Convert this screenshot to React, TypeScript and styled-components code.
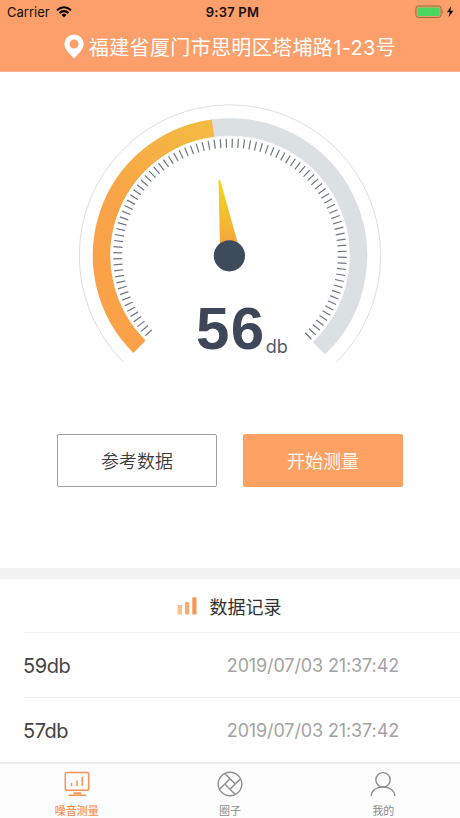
import React from 'react';
import styled, { createGlobalStyle } from 'styled-components';

const GlobalStyle = createGlobalStyle`
  * { box-sizing: border-box; }
  body {
    margin: 0;
    background: #fff;
    font-family: Inter, "Noto Sans CJK SC", sans-serif;
    color: #444;
  }
`;

const Screen = styled.div`
  width: 460px;
  height: 818px;
  display: flex;
  flex-direction: column;
  overflow: hidden;
  background: #fff;
`;

const Header = styled.header`
  height: 72px;
  background: #fc9f6a;
  border-bottom: 1px solid #fcb48c;
`;

const StatusBar = styled.div`
  height: 24px;
  padding: 0 5px 0 7px;
  display: grid;
  grid-template-columns: 1fr auto 1fr;
  align-items: center;
  color: #15100d;
  font-size: 13px;
  line-height: 24px;
`;

const Carrier = styled.div`
  display: flex;
  align-items: center;
  gap: 6px;
`;

const Clock = styled.div`
  font-weight: 600;
  letter-spacing: 0.2px;
  padding-left: 3px;
`;

const Battery = styled.div`
  display: flex;
  justify-content: flex-end;
`;

const Location = styled.h1`
  margin: 0;
  height: 45px;
  display: flex;
  align-items: center;
  justify-content: center;
  gap: 5px;
  color: #fff;
  font-size: 20px;
  font-weight: 400;
  letter-spacing: 0.36px;
  white-space: nowrap;
`;

const Meter = styled.section`
  height: 496px;
  display: flex;
  flex-direction: column;
  align-items: center;
`;

const Gauge = styled.div`
  display: grid;
  width: 310px;
  height: 265px;
  margin-top: 28px;
  & > * { grid-area: 1 / 1; }
`;

const Reading = styled.div`
  align-self: end;
  display: flex;
  align-items: flex-end;
  padding: 0 0 0 121px;
  height: 68px;
  color: #3e4659;
`;

const Value = styled.span`
  font-family: "Liberation Sans", Arial, sans-serif;
  font-size: 60px;
  line-height: 68px;
  margin-bottom: 2px;
  font-weight: 700;
  letter-spacing: 1.5px;
`;

const Unit = styled.span`
  font-size: 18px;
  line-height: 22px;
  margin-bottom: 7px;
  color: #555b66;
`;

const Actions = styled.div`
  display: flex;
  gap: 26px;
  margin-top: 69px;
`;

const Button = styled.button<{ $primary?: boolean }>`
  width: 160px;
  height: 53px;
  padding: 0 0 1px;
  border-radius: 2px;
  border: 1px solid ${(p) => (p.$primary ? '#fda263' : '#a0a0a0')};
  background: ${(p) => (p.$primary ? '#fda263' : '#fff')};
  color: ${(p) => (p.$primary ? '#fff' : '#3c3c3c')};
  font: 350 18px Inter, "Noto Sans CJK SC", sans-serif;
`;

const Records = styled.section`
  flex: 1;
  border-top: 11px solid #f2f2f2;
`;

const RecordsTitle = styled.h2`
  margin: 0;
  height: 53px;
  padding: 0 2px 0 0;
  display: flex;
  align-items: center;
  justify-content: center;
  gap: 13px;
  font-size: 18px;
  font-weight: 400;
  color: #303030;
`;

const Row = styled.div`
  height: 65px;
  margin-left: 23px;
  padding: 1px 61px 0 0;
  display: flex;
  align-items: center;
  justify-content: space-between;
  border-top: 1px solid #f2f2f2;
`;

const Level = styled.span`
  font-size: 20px;
  letter-spacing: -0.45px;
`;

const Stamp = styled.time`
  font-size: 18px;
  letter-spacing: -0.12px;
  color: #a3a3a3;
`;

const TabBar = styled.nav`
  height: 56px;
  display: grid;
  grid-template-columns: repeat(3, 1fr);
  border-top: 2px solid #ececec;
  background: #fdfdfd;
`;

const Tab = styled.a<{ $active?: boolean }>`
  display: flex;
  flex-direction: column;
  align-items: center;
  padding-top: 7px;
  gap: 6px;
  font-size: 11px;
  line-height: 16px;
  font-weight: ${(p) => (p.$active ? 500 : 400)};
  color: ${(p) => (p.$active ? '#f79256' : '#8e8e8e')};
`;

const point = (r: number, deg: number) => {
  const a = (deg * Math.PI) / 180;
  return [155 + r * Math.sin(a), 156 - r * Math.cos(a)];
};

const arc = (r: number, from: number, to: number) => {
  const [x1, y1] = point(r, from);
  const [x2, y2] = point(r, to);
  return `M${x1} ${y1}A${r} ${r} 0 ${to - from > 180 ? 1 : 0} 1 ${x2} ${y2}`;
};

const ticks = Array.from({ length: 91 }, (_, i) => {
  const deg = -133.5 + i * 2.992;
  const [x1, y1] = point(107.8, deg);
  const [x2, y2] = point(116.8, deg);
  return `M${x1} ${y1}L${x2} ${y2}`;
}).join('');

const Dial = () => (
  <svg width="310" height="265" viewBox="0 0 310 265" fill="none">
    <defs>
      <linearGradient id="level" gradientUnits="userSpaceOnUse" x1="40" y1="190" x2="138" y2="20">
        <stop offset="0" stopColor="#fba249" />
        <stop offset="0.4" stopColor="#f9a448" />
        <stop offset="1" stopColor="#f3bc42" />
      </linearGradient>
      <linearGradient id="needle" x1="0" y1="0" x2="0" y2="1">
        <stop offset="0" stopColor="#f2d91f" />
        <stop offset="1" stopColor="#f4a33c" />
      </linearGradient>
    </defs>
    <g transform="translate(0 -0.5)">
      <path d={arc(150.7, -135, 135)} stroke="#dedede" />
      <path d={arc(128.5, -8, 136.2)} stroke="#dbe0e3" strokeWidth="17.5" />
      <path d={arc(128.5, -135.2, -7.6)} stroke="url(#level)" strokeWidth="17.5" />
      <path d={ticks} stroke="#6f7580" strokeWidth="1.2" />
    </g>
    <path d="M143.500 80h1.700l18.400 66-18.600 2z" fill="url(#needle)" />
    <circle cx="154.4" cy="155.8" r="15.6" fill="#3d4c5a" />
  </svg>
);

const WifiIcon = () => (
  <svg width="16" height="12" viewBox="0 0 16 12" fill="none" stroke="#000" strokeWidth="2.1">
    <path d="M1 4.300Q8-1.800 15 4.300M3.600 7Q8 3.100 12.400 7" />
    <path d="M5.500 8.800Q8 6.800 10.500 8.800L8 11.400z" fill="#000" stroke="none" />
  </svg>
);

const BatteryIcon = () => (
  <svg width="40" height="14" viewBox="0 0 40 14">
    <rect x="0.9" y="1" width="25.2" height="11.4" rx="2.6" fill="none" stroke="#8d6a3f" />
    <rect x="2.4" y="2.5" width="22.2" height="8.4" rx="1.2" fill="#4bd660" />
    <path d="M27.4 4.7q1.6 2 0 4z" fill="#8d6a3f" />
    <path d="M36.2 1.2l-4.2 6h2.9l-1.4 5 4.8-6.4h-3z" fill="#000" />
  </svg>
);

const PinIcon = () => (
  <svg width="20" height="25" viewBox="0 0 20 25">
    <path
      fill="#fff"
      fillRule="evenodd"
      d="M10 .4a9.7 9.7 0 0 1 9.7 9.7c0 5-5.4 10-9.7 14.5C5.7 20.1.3 15.1.3 10.1A9.7 9.7 0 0 1 10 .4zm0 5.1a4.5 4.5 0 1 0 0 9 4.5 4.5 0 0 0 0-9z"
    />
  </svg>
);

const BarsIcon = () => (
  <svg width="20" height="18" viewBox="0 0 20 18">
    <path d="M.5 8H5v9.5H.5z" fill="#fdc08a" />
    <path d="M8 5h4.2v12.5H8z" fill="#fbab72" />
    <path d="M15.3.3h4.2v17.2h-4.2z" fill="#f9965c" />
  </svg>
);

const MonitorIcon = () => (
  <svg width="26" height="26" viewBox="0 0 26 26" fill="none" stroke="currentColor" strokeWidth="1.5">
    <rect x="1.3" y="1.5" width="23.4" height="17.8" rx="1.8" />
    <path d="M7.6 12v3M13 9.5V15M18.2 5.8V15" />
    <path d="M9.5 22.3H17" strokeWidth="2" />
    <path d="M4.5 24.3H22" />
  </svg>
);

const CircleIcon = () => (
  <svg width="26" height="26" viewBox="0 0 26 26" fill="none" stroke="currentColor" strokeWidth="1.4">
    <circle cx="13" cy="13" r="11.8" />
    <path d="M18.2 13L8 2.8M13 18.2L23.2 8M7.8 13L18 23.2M13 7.8L2.8 18" />
  </svg>
);

const PersonIcon = () => (
  <svg width="26" height="26" viewBox="0 0 26 26" fill="none" stroke="currentColor" strokeWidth="1.4">
    <circle cx="13" cy="8.8" r="7.2" />
    <path d="M1.2 25c0-5.2 5-9 11.8-9s11.8 3.8 11.8 9" />
  </svg>
);

const records = [
  { level: '59db', time: '2019/07/03 21:37:42' },
  { level: '57db', time: '2019/07/03 21:37:42' },
];

const tabs = [
  { label: '噪音测量', Icon: MonitorIcon },
  { label: '圈子', Icon: CircleIcon },
  { label: '我的', Icon: PersonIcon },
];

export default function App() {
  return (
    <Screen>
      <GlobalStyle />
      <Header>
        <StatusBar>
          <Carrier>Carrier <WifiIcon /></Carrier>
          <Clock>9:37 PM</Clock>
          <Battery><BatteryIcon /></Battery>
        </StatusBar>
        <Location><PinIcon />福建省厦门市思明区塔埔路1-23号</Location>
      </Header>
      <Meter>
        <Gauge>
          <Dial />
          <Reading><Value>56</Value><Unit>db</Unit></Reading>
        </Gauge>
        <Actions>
          <Button>参考数据</Button>
          <Button $primary>开始测量</Button>
        </Actions>
      </Meter>
      <Records>
        <RecordsTitle><BarsIcon />数据记录</RecordsTitle>
        {records.map((r) => (
          <Row key={r.level}>
            <Level>{r.level}</Level>
            <Stamp>{r.time}</Stamp>
          </Row>
        ))}
      </Records>
      <TabBar>
        {tabs.map(({ label, Icon }, i) => (
          <Tab key={label} $active={i === 0}><Icon />{label}</Tab>
        ))}
      </TabBar>
    </Screen>
  );
}
